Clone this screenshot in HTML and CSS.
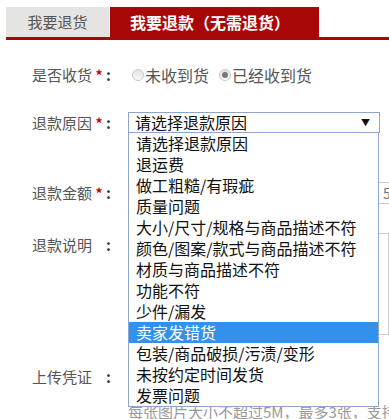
FILE: index.html
```html
<!DOCTYPE html>
<html lang="zh-CN">
<head>
    <meta charset="UTF-8">
    <title>申请退款</title>
    <link rel="stylesheet" href="styles.css">
</head>
<body>
    <div class="tabs">
        <div class="tab tab-plain">我要退货</div>
        <div class="tab tab-active">我要退款（无需退货）</div>
    </div>

    <form class="refund-form">
        <div class="row row-receive">
            <div class="label"><span class="name">是否收货</span><span class="star">*</span><span class="colon">:</span></div>
            <label class="radio"><span class="dot"></span>未收到货</label>
            <label class="radio"><span class="dot checked"></span>已经收到货</label>
        </div>

        <div class="row row-reason">
            <div class="label"><span class="name">退款原因</span><span class="star">*</span><span class="colon">:</span></div>
            <div class="select-wrap">
                <div class="select">请选择退款原因<span class="arrow">▼</span></div>
                <!-- 展开的下拉列表 -->
                <ul class="options">
                    <li>请选择退款原因</li>
                    <li>退运费</li>
                    <li>做工粗糙/有瑕疵</li>
                    <li>质量问题</li>
                    <li>大小/尺寸/规格与商品描述不符</li>
                    <li>颜色/图案/款式与商品描述不符</li>
                    <li>材质与商品描述不符</li>
                    <li>功能不符</li>
                    <li>少件/漏发</li>
                    <li class="active">卖家发错货</li>
                    <li>包装/商品破损/污渍/变形</li>
                    <li>未按约定时间发货</li>
                    <li>发票问题</li>
                </ul>
            </div>
        </div>

        <div class="row row-amount">
            <div class="label"><span class="name">退款金额</span><span class="star">*</span><span class="colon">:</span></div>
            <div class="input">5.00</div>
        </div>

        <div class="row row-desc">
            <div class="label"><span class="name">退款说明</span><span class="star"></span><span class="colon">:</span></div>
            <div class="textarea"></div>
        </div>

        <div class="row row-upload">
            <div class="label"><span class="name">上传凭证</span><span class="star"></span><span class="colon">:</span></div>
        </div>
        <p class="hint">每张图片大小不超过5M，最多3张，支持JPG、PNG格式</p>
    </form>
</body>
</html>
```

FILE: styles.css
```css
html, body {
    overflow: hidden;
}
body {
    margin: 0;
    font-family: "Noto Sans CJK SC", sans-serif;
    color: #555;
}
.tabs {
    display: flex;
    gap: 1px;
    margin: 7px 0 0 6px;
    height: 30px;
    border-bottom: 3px solid #a80707;
}
.tab {
    line-height: 30px;
}
.tab-plain {
    width: 103px;
    background: #e6e4e2;
    color: #555;
    font-size: 15px;
    text-align: center;
}
.tab-active {
    width: 189px;
    padding-left: 20px;
    background: #a80707;
    color: #fff;
    font-size: 16px;
    font-weight: bold;
}
.refund-form {
    padding-left: 32px;
}
.row {
    display: flex;
    align-items: center;
}
.label {
    display: flex;
    width: 96px;
    flex-shrink: 0;
    font-size: 15px;
    line-height: 20px;
    color: #555;
}
.label .name {
    width: 60px;
}
.label .star {
    width: 14px;
    text-align: center;
    color: #c00;
    font-size: 14px;
    font-weight: bold;
}
.label .colon {
    color: #333;
    font-weight: bold;
}
.row-receive {
    margin-top: 24px;
    height: 22px;
}
.radio {
    display: flex;
    align-items: center;
    margin-right: 6px;
    font-size: 16px;
    line-height: 22px;
    color: #555;
}
.dot {
    position: relative;
    width: 10px;
    height: 10px;
    margin: 0 1px 0 4px;
    border: 1px solid #c8c8c8;
    border-radius: 50%;
    background: linear-gradient(#e4e4e4, #fafafa);
}
.dot.checked::after {
    content: "";
    position: absolute;
    top: 2px;
    left: 2px;
    width: 6px;
    height: 6px;
    border-radius: 50%;
    background: #777;
}
.row-reason {
    margin-top: 26px;
}
.select-wrap {
    position: relative;
    z-index: 10;
}
.select {
    position: relative;
    width: 244px;
    height: 19px;
    padding-left: 6px;
    border: 1px solid #8ea5cc;
    background: #fff;
    color: #111;
    font-size: 16px;
    line-height: 19px;
}
.arrow {
    position: absolute;
    right: 9px;
    top: 0;
    font-size: 9px;
    color: #111;
}
.options {
    position: absolute;
    top: 100%;
    left: 0;
    width: 249px;
    margin: 0;
    padding: 0;
    list-style: none;
    border: 1px solid #8ea5cc;
    border-top: none;
    background: #fff;
}
.options li {
    height: 21px;
    padding-left: 7px;
    font-size: 16px;
    line-height: 21px;
    color: #111;
}
.options li.active {
    background: #3390ec;
    color: #fff;
}
.row-amount {
    margin-top: 49px;
}
.input {
    width: 300px;
    height: 20px;
    padding-left: 254px;
    border: 1px solid #ccc;
    font-size: 14px;
    line-height: 20px;
    color: #777;
}
.row-desc {
    align-items: flex-start;
    margin-top: 29px;
}
.row-desc .label {
    margin-top: 2px;
}
.textarea {
    width: 300px;
    height: 100px;
    border: 1px solid #ccc;
}
.row-upload {
    margin-top: 31px;
    height: 22px;
}
.hint {
    margin: 14px 0 0 96px;
    font-size: 15px;
    line-height: 20px;
    color: #999;
    white-space: nowrap;
}
```
